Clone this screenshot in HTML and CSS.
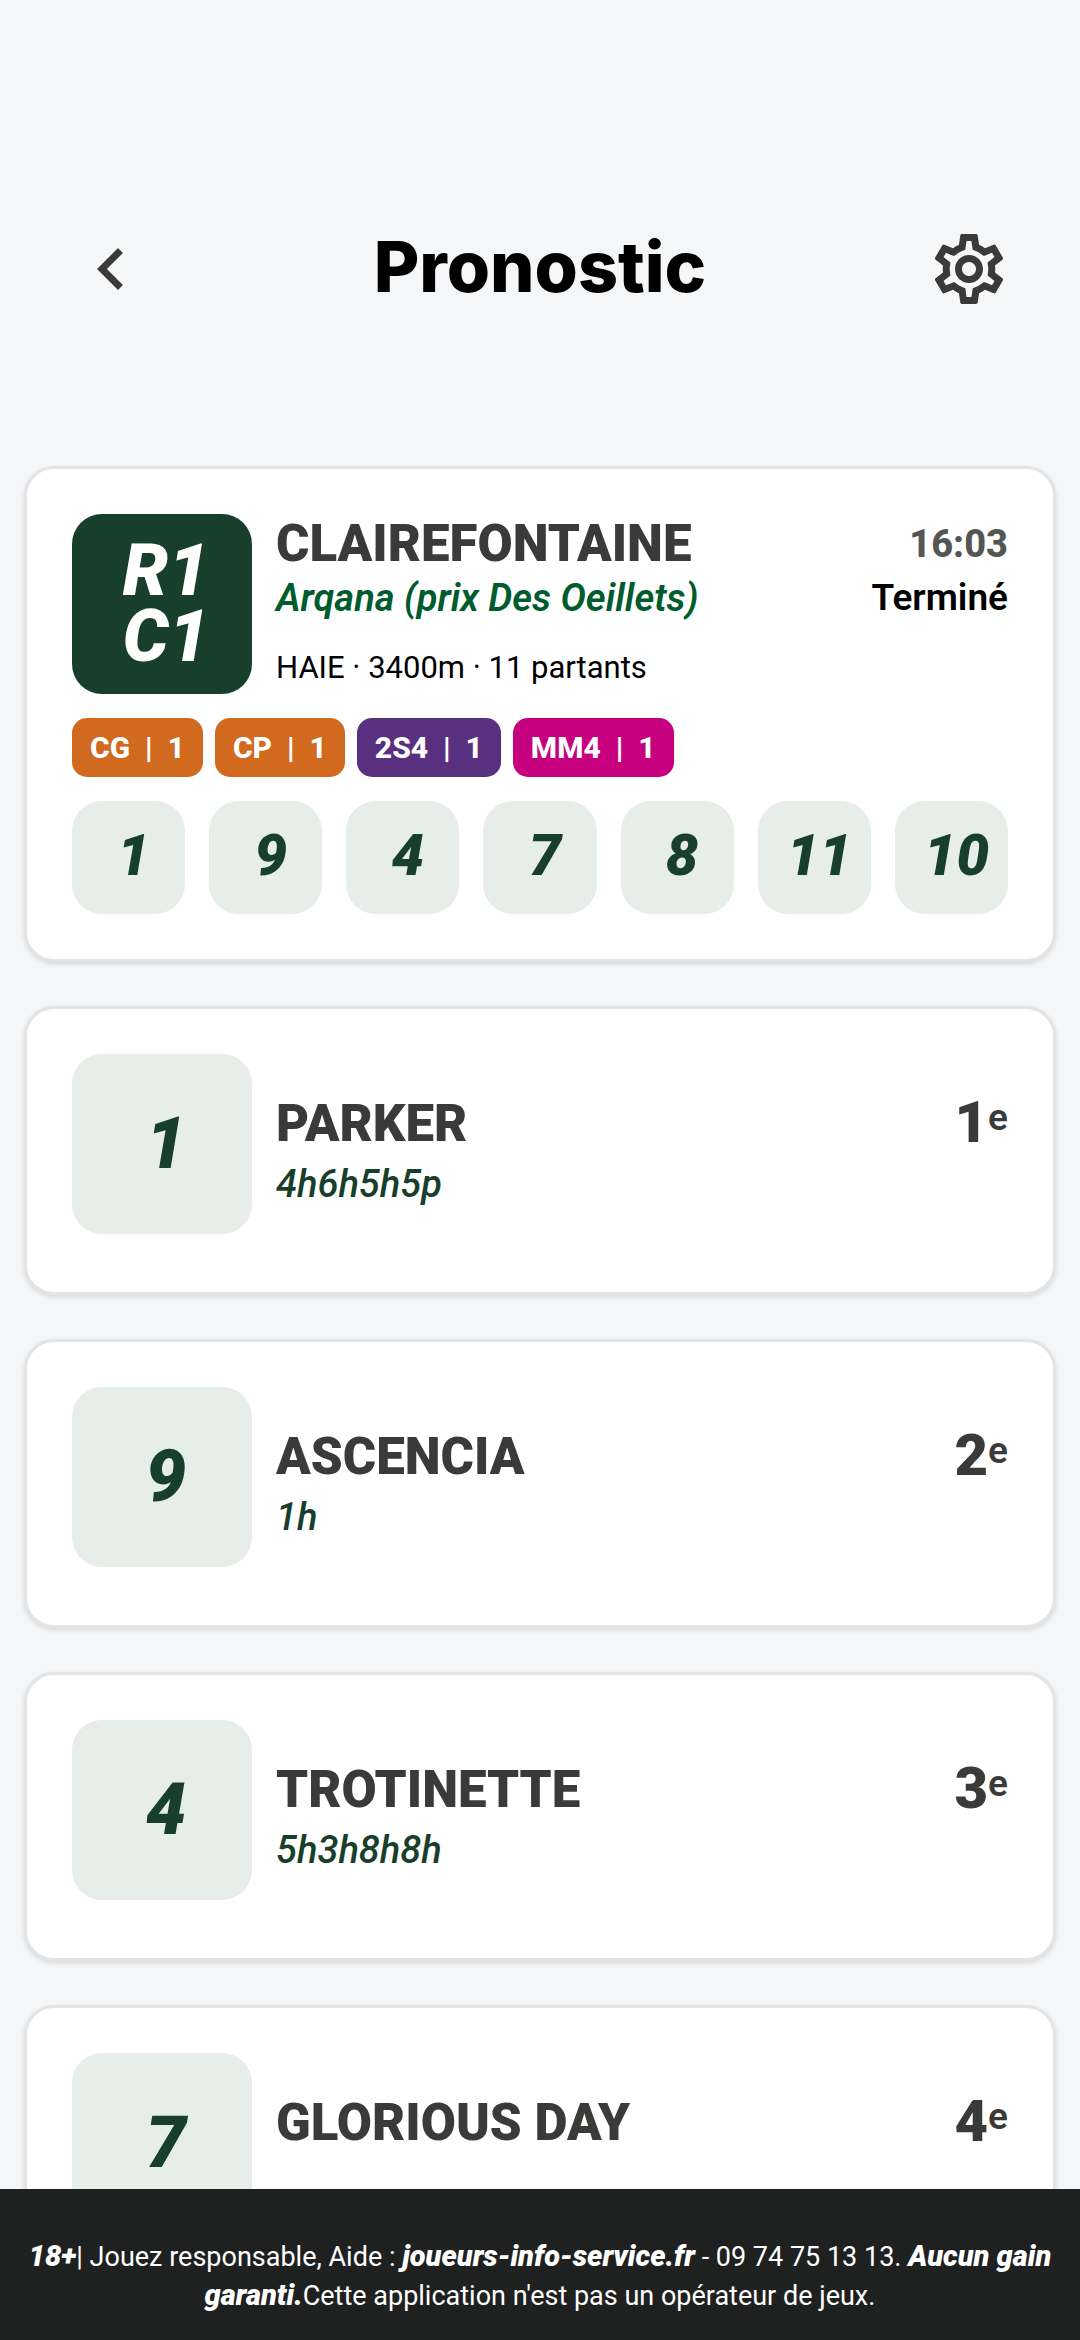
FILE: index.html
```html
<!DOCTYPE html>
<html lang="fr">
<head>
  <meta charset="UTF-8">
  <meta name="viewport" content="width=device-width, initial-scale=1.0">
  <title>Pronostic</title>
  <link rel="stylesheet" href="styles.css">
</head>
<body>
  <header class="topbar">
    <button class="icon-btn" type="button" aria-label="Retour">
      <svg viewBox="0 0 24 24"><path d="M15.41 7.41 14 6l-6 6 6 6 1.41-1.41L10.83 12z"/></svg>
    </button>
    <h1>Pronostic</h1>
    <button class="icon-btn" type="button" aria-label="Paramètres">
      <svg viewBox="0 0 24 24"><path d="M19.43 12.98c.04-.32.07-.64.07-.98 0-.34-.03-.66-.07-.98l2.11-1.65c.19-.15.24-.42.12-.64l-2-3.46c-.09-.16-.26-.25-.44-.25-.06 0-.12.01-.17.03l-2.49 1c-.52-.4-1.08-.73-1.69-.98l-.38-2.65C14.46 2.18 14.25 2 14 2h-4c-.25 0-.46.18-.49.42l-.38 2.65c-.61.25-1.17.59-1.69.98l-2.49-1c-.06-.02-.12-.03-.18-.03-.17 0-.34.09-.43.25l-2 3.46c-.13.22-.07.49.12.64l2.11 1.65c-.04.32-.07.65-.07.98 0 .33.03.66.07.98l-2.11 1.65c-.19.15-.24.42-.12.64l2 3.46c.09.16.26.25.44.25.06 0 .12-.01.17-.03l2.49-1c.52.4 1.08.73 1.69.98l.38 2.65c.03.24.24.42.49.42h4c.25 0 .46-.18.49-.42l.38-2.65c.61-.25 1.17-.59 1.69-.98l2.49 1c.06.02.12.03.18.03.17 0 .34-.09.43-.25l2-3.46c.12-.22.07-.49-.12-.64l-2.11-1.65zm-1.98-1.71c.04.31.05.52.05.73 0 .21-.02.43-.05.73l-.14 1.13.89.7 1.08.84-.7 1.21-1.27-.51-1.04-.42-.9.68c-.43.32-.84.56-1.25.73l-1.06.43-.16 1.13-.2 1.35h-1.4l-.19-1.35-.16-1.13-1.06-.43c-.43-.18-.83-.41-1.23-.71l-.91-.7-1.06.43-1.27.51-.7-1.21 1.08-.84.89-.7-.14-1.13c-.03-.31-.05-.54-.05-.74s.02-.43.05-.73l.14-1.13-.89-.7-1.08-.84.7-1.21 1.27.51 1.04.42.9-.68c.43-.32.84-.56 1.25-.73l1.06-.43.16-1.13.2-1.35h1.39l.19 1.35.16 1.13 1.06.43c.43.18.83.41 1.23.71l.91.7 1.06-.43 1.27-.51.7 1.21-1.07.85-.89.7.14 1.13zM12 8c-2.21 0-4 1.79-4 4s1.79 4 4 4 4-1.79 4-4-1.79-4-4-4zm0 6c-1.1 0-2-.9-2-2s.9-2 2-2 2 .9 2 2-.9 2-2 2z"/></svg>
    </button>
  </header>

  <main class="list">
    <section class="card race">
      <div class="race-head">
        <div class="badge badge-dark">R1<br>C1</div>
        <div class="info">
          <h2>CLAIREFONTAINE</h2>
          <p class="prize">Arqana (prix Des Oeillets)</p>
          <p class="details">HAIE · 3400m · 11 partants</p>
        </div>
        <div class="status">
          <time>16:03</time>
          <p>Terminé</p>
        </div>
      </div>
      <div class="chips">
        <span class="chip orange">CG&nbsp; |&nbsp; 1</span>
        <span class="chip orange">CP&nbsp; |&nbsp; 1</span>
        <span class="chip purple">2S4&nbsp; |&nbsp; 1</span>
        <span class="chip pink">MM4&nbsp; |&nbsp; 1</span>
      </div>
      <div class="picks">
        <span>1</span>
        <span>9</span>
        <span>4</span>
        <span>7</span>
        <span>8</span>
        <span>11</span>
        <span>10</span>
      </div>
    </section>

    <section class="card horse">
      <div class="badge">1</div>
      <div class="info">
        <h2>PARKER</h2>
        <p class="form">4h6h5h5p</p>
      </div>
      <div class="rank">1<span>e</span></div>
    </section>

    <section class="card horse">
      <div class="badge">9</div>
      <div class="info">
        <h2>ASCENCIA</h2>
        <p class="form">1h</p>
      </div>
      <div class="rank">2<span>e</span></div>
    </section>

    <section class="card horse">
      <div class="badge">4</div>
      <div class="info">
        <h2>TROTINETTE</h2>
        <p class="form">5h3h8h8h</p>
      </div>
      <div class="rank">3<span>e</span></div>
    </section>

    <section class="card horse">
      <div class="badge">7</div>
      <div class="info">
        <h2>GLORIOUS DAY</h2>
      </div>
      <div class="rank">4<span>e</span></div>
    </section>
  </main>

  <footer class="legal">
    <p><b>18+</b>| Jouez responsable, Aide : <a href="#">joueurs-info-service.fr</a> - 09 74 75 13 13. <b>Aucun gain garanti.</b>Cette application n'est pas un opérateur de jeux.</p>
  </footer>
</body>
</html>
```
FILE: styles.css
```css
* {
  box-sizing: border-box;
  margin: 0;
  padding: 0;
}
body {
  display: flex;
  flex-direction: column;
  height: 100vh;
  background: #f5f6f8;
  color: #000;
  font-family: Roboto, "Liberation Sans", sans-serif;
}

/* header */
.topbar {
  display: flex;
  align-items: center;
  justify-content: space-between;
  padding: 220px 69px 148px;
}
.topbar h1 {
  padding-bottom: 4px;
  font-family: Inter, Roboto, sans-serif;
  font-size: 70px;
  line-height: 94px;
  font-weight: 800;
}
.icon-btn {
  width: 84px;
  height: 84px;
  border: none;
  background: none;
  cursor: pointer;
}
.icon-btn svg {
  display: block;
  width: 84px;
  height: 84px;
  fill: #3a3b39;
}

/* cards */
.list {
  flex: 1;
  min-height: 0;
  overflow: hidden;
  display: flex;
  flex-direction: column;
  gap: 44px;
  padding: 0 24px;
}
.card {
  flex-shrink: 0;
  background: #fff;
  border: 3px solid #e3e4e6;
  border-radius: 30px;
  padding: 45px;
  box-shadow: 0 2px 5px rgba(0, 0, 0, 0.12);
}
.badge {
  display: flex;
  align-items: center;
  justify-content: center;
  flex-shrink: 0;
  width: 180px;
  height: 180px;
  padding-left: 8px;
  border-radius: 30px;
  background: #e7eee9;
  color: #183f2b;
  font-size: 72px;
  line-height: 66px;
  font-weight: 900;
  font-style: italic;
}
.badge-dark {
  background: #183f2b;
  color: #fff;
}
.info {
  flex: 1;
}
.info h2 {
  color: #3a3b39;
  font-size: 51px;
  line-height: 60px;
  font-weight: 900;
}

.race {
  display: flex;
  flex-direction: column;
  gap: 24px;
}
.race-head {
  display: flex;
  gap: 24px;
}
.prize {
  color: #005c2d;
  font-size: 38px;
  line-height: 48px;
  font-weight: 600;
  font-style: italic;
}
.details {
  margin-top: 24px;
  font-size: 31px;
  line-height: 44px;
}
.status {
  text-align: right;
  font-size: 37px;
  line-height: 48px;
  font-weight: 600;
}
.status time {
  display: block;
  color: #555653;
  font-size: 38px;
  line-height: 60px;
  font-weight: 800;
}

.chips {
  display: flex;
  gap: 12px;
}
.chip {
  padding: 0 18px;
  border-radius: 15px;
  color: #fff;
  font-size: 30px;
  line-height: 59px;
  font-weight: 800;
}
.orange {
  background: #d1691e;
}
.purple {
  background: #59307f;
}
.pink {
  background: #c6007e;
}

.picks {
  display: flex;
  gap: 24px;
}
.picks span {
  flex: 1;
  height: 113px;
  padding-left: 10px;
  border-radius: 30px;
  background: #e7eee9;
  color: #183f2b;
  font-size: 58px;
  line-height: 108px;
  font-weight: 900;
  font-style: italic;
  text-align: center;
}

.horse {
  display: flex;
  gap: 24px;
  padding-bottom: 58px;
}
.horse .info {
  padding-top: 40px;
}
.form {
  color: #183f2b;
  font-size: 38px;
  line-height: 60px;
  font-weight: 500;
  font-style: italic;
}
.rank {
  display: flex;
  padding-top: 35px;
  color: #3a3b39;
  font-size: 58px;
  line-height: 66px;
  font-weight: 900;
}
.rank span {
  font-size: 37px;
  line-height: 58px;
  font-weight: 600;
}

/* legal notice */
.legal {
  padding: 48px 24px 25px;
  background: #1f2120;
  color: #fff;
  font-size: 27px;
  line-height: 38px;
  font-weight: 400;
  text-align: center;
}
.legal b,
.legal a {
  color: #fff;
  font-size: 29px;
  font-weight: 900;
  font-style: italic;
  text-decoration: none;
}
```
